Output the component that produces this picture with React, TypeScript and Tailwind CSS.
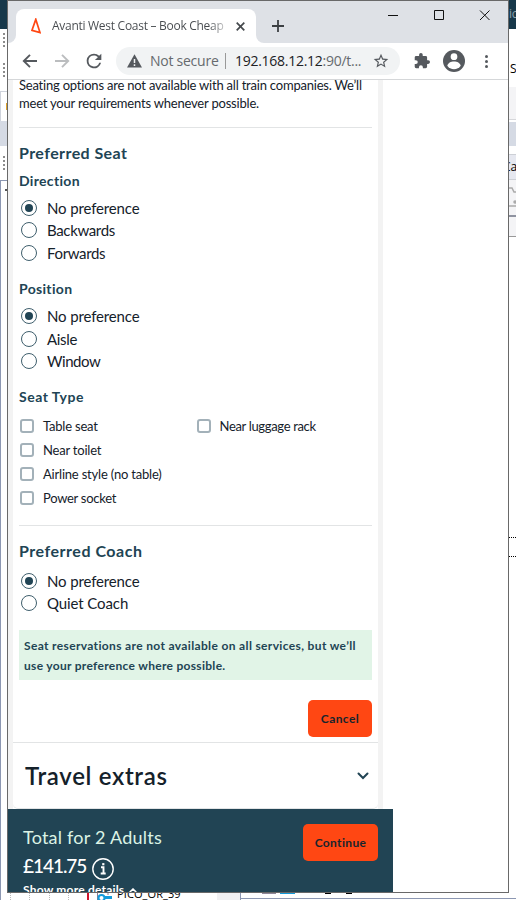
import { ReactNode } from "react";

function Radio({ label, checked, track }: { label: string; checked?: boolean; track: string }) {
  return (
    <label className="flex h-[22.5px] items-center">
      <span className="ml-[2px] flex size-4 shrink-0 items-center justify-center rounded-full border border-[#3f5f6d]">
        {checked && <span className="size-2 rounded-full bg-[#214454]" />}
      </span>
      <span className={`ml-[10px] whitespace-nowrap text-[15px] leading-5 text-[#15212a] ${track}`}>{label}</span>
    </label>
  );
}

function Check({ label, track }: { label: string; track: string }) {
  return (
    <label className="flex h-6 items-center">
      <span className="ml-px size-[14px] shrink-0 rounded-[3px] border-2 border-[#a3b1b9]" />
      <span className={`ml-[9px] whitespace-nowrap text-[13px] leading-5 text-[#15212a] ${track}`}>{label}</span>
    </label>
  );
}

function Line({ children, className }: { children: ReactNode; className: string }) {
  return <div className={`whitespace-nowrap ${className}`}>{children}</div>;
}

function Dots({ className }: { className: string }) {
  return (
    <div className={`flex flex-col items-center justify-between pl-px ${className}`}>
      <i className="size-[2px] bg-[#8c8c8c]" />
      <i className="size-[2px] bg-[#8c8c8c]" />
      <i className="size-[2px] bg-[#8c8c8c]" />
      <i className="size-[2px] bg-[#8c8c8c]" />
    </div>
  );
}

function Desktop() {
  return (
    <div className="flex h-[900px] flex-col bg-white">
      <div className="flex h-[889px] shrink-0 justify-between">
        <div className="flex w-[7px] flex-col">
          <div className="h-[29px] bg-[#17384a]" />
          <Dots className="mt-1 h-[14px]" />
          <Dots className="mt-4 h-[14px]" />
          <div className="mt-[14px] flex h-[30px] items-center border-t border-l border-[#cfd3dc] pl-[5px]">
            <i className="h-[7px] w-px bg-[#dfa32c]" />
          </div>
          <div className="h-[25px] bg-[#d5dae4]" />
          <Dots className="mt-[10px] h-[14px]" />
          <div className="mt-[10px] flex-1 border-t border-l border-[#8c97b2] pt-2 pl-[4px]">
            <i className="block h-[2px] w-[2px] bg-[#555]" />
          </div>
        </div>
        <div className="flex w-[7px] flex-col overflow-hidden font-['Open_Sans',sans-serif] text-[12px] leading-4 whitespace-nowrap text-black">
          <div className="h-[29px] bg-[#17384a] pt-[6px] tracking-[-0.4px] text-[#8fa3ae]">ic</div>
          <div className="h-[58px] pt-8"><span className="ml-px">S</span></div>
          <div className="h-[33px] border-b border-[#d6d7da] bg-[#f4f4f6]" />
          <div className="mt-[2px] h-6 bg-[#d5dae4]" />
          <div className="mt-2 h-[26px] border-y border-[#cdd0d6] bg-[#e6e8f0] pt-1"><span className="-ml-[6px]">Ca</span></div>
          <svg className="h-[35px] w-[7px] bg-[#f4f4f6]" viewBox="0 0 7 35" fill="none" stroke="#aaa" strokeWidth="1.5">
            <path d="M0 8h3l2 4h2M0 26h7" />
            <circle cx="6" cy="22" r="1" fill="#aaa" />
          </svg>
          <div className="h-[22px] border-t-2 border-b border-t-[#8f93a0] border-b-[#999] bg-[#f4f4f6]" />
          <div className="mt-[300px] h-[20px] border-y border-dotted border-black" />
        </div>
      </div>
      <div className="flex h-[11px] font-['Open_Sans',sans-serif] text-[11px] text-black">
        <div className="flex w-[241px] shrink-0 border-l border-[#8c97b2]">
          <div className="flex w-[88px] justify-between pl-[9px]">
            <i className="border-l border-dotted border-[#bbb]" />
            <i className="border-l border-dotted border-[#bbb]" />
            <i className="border-l border-dotted border-[#bbb]" />
            <i className="border-l border-dotted border-[#bbb]" />
            <i className="w-[2px] bg-[#cf142b]" />
          </div>
          <svg className="ml-[7px] h-[11px] w-4 shrink-0" viewBox="0 0 16 11">
            <path d="M1.500 0v11M12 4v2" stroke="#897b91" fill="none" />
            <circle cx="5.500" cy="9" r="3" fill="none" stroke="#129bdb" strokeWidth="2" />
            <path d="M8 7h8v3H8z" fill="#129bdb" />
          </svg>
          <span className="ml-[5px] -mt-[2px] whitespace-nowrap leading-[13px] tracking-[0.1px]">PICO_OR_39</span>
          <div className="ml-auto w-[24px] border-r border-[#8c97b2] bg-[#f1f1f3]" />
        </div>
        <div className="flex flex-1 flex-col">
          <div className="flex h-[10px] items-end border-b border-[#8c97b2] pl-[21px] pb-[4px]">
            <i className="h-[2px] w-[14px] bg-[#8e8799]" />
            <i className="ml-1 h-[2px] w-[15px] bg-[#129bdb]" />
            <i className="ml-[30px] h-[2px] w-[6px] bg-black" />
            <i className="ml-[15px] h-[2px] w-[6px] bg-black" />
          </div>
        </div>
      </div>
    </div>
  );
}

function BrowserChrome() {
  return (
    <header className="font-['Open_Sans','Noto_Sans',sans-serif]">
      <div className="flex h-[42px] bg-[#dee1e6]">
        <div className="flex w-2 items-end bg-white"><div className="h-[42px] w-2 rounded-br-lg bg-[#dee1e6]" /></div>
        <div className="mt-2 flex w-[240px] items-center rounded-t-lg bg-white">
          <svg className="ml-[15px] h-4 w-[10px]" viewBox="0 0 10 16" fill="none" stroke="#ff4713" strokeWidth="1.7">
            <path d="M4.800 1.400 1 12.300l8 2.300z" />
          </svg>
          <span className="ml-[11px] w-[174px] whitespace-nowrap bg-gradient-to-r from-[#45494d] from-90% to-[#d8d8d8] bg-clip-text text-[12px] leading-5 tracking-[-0.28px] text-transparent">Avanti West Coast – Book Cheap</span>
          <svg className="ml-[10px] size-[9px]" viewBox="0 0 9 9" stroke="#45494d" strokeWidth="1.7"><path d="m.7.7 7.6 7.6m0-7.6L.7 8.3" /></svg>
        </div>
        <div className="w-2 bg-white"><div className="h-[42px] w-2 rounded-bl-lg bg-[#dee1e6]" /></div>
        <svg className="mt-[19px] ml-2 size-3" viewBox="0 0 12 12" stroke="#3c4043" strokeWidth="1.8"><path d="M6 0v12M0 6h12" /></svg>
        <svg className="mt-[9px] ml-auto mr-[17px] h-[11px] w-[104px]" viewBox="0 0 104 11" fill="none" stroke="#111" strokeWidth="1">
          <path d="M1 5.500h10M47.500.5h9v9h-9zM93 .5l9.500 9.500m0-9.500L93 10" />
        </svg>
      </div>
      <div className="flex h-[37px] items-center border-b border-[#d5d7d9] bg-white">
        <svg className="ml-[14px] h-[14px] w-4" viewBox="0 0 16 14" fill="none" stroke="#55595e" strokeWidth="1.9"><path d="M15 7H2M8 .8 1.8 7 8 13.2" /></svg>
        <svg className="ml-4 h-[14px] w-4" viewBox="0 0 16 14" fill="none" stroke="#bbbdbf" strokeWidth="1.9"><path d="M1 7h13M8 .8 14.2 7 8 13.2" /></svg>
        <svg className="ml-[13px] size-[22px]" viewBox="0 0 24 24" fill="#55595e"><path d="M17.65 6.35A7.96 7.96 0 0 0 12 4a8 8 0 1 0 7.73 10h-2.08A6 6 0 1 1 12 6c1.66 0 3.14.69 4.22 1.78L13 11h7V4z" /></svg>
        <div className="ml-[11px] flex h-7 w-[284px] items-center rounded-full bg-[#f1f3f4]">
          <svg className="ml-[11px] h-[14px] w-[15px]" viewBox="0 0 15 14"><path d="M7.500.300 15 13.500H0z" fill="#55595e" /><path d="M7.500 5v4M7.500 10.300v1.700" stroke="#f1f3f4" strokeWidth="1.500" /></svg>
          <span className="ml-[8px] w-[67px] whitespace-nowrap text-[14px] leading-5 tracking-[-0.25px] text-[#666a6e]">Not secure</span>
          <i className="ml-[8px] h-4 w-px bg-[#999]" />
          <span className="ml-[9px] w-[124px] whitespace-nowrap text-[14px] leading-5 tracking-[-0.27px] text-[#202124]">192.168.12.12<span className="text-[#666a6e]">:90/t...</span></span>
          <svg className="ml-[14px] size-[16px]" viewBox="1 1 22 22" fill="#55595e"><path d="m22 9.240-7.190-.620L12 2 9.190 8.630 2 9.240l5.460 4.730L5.820 21 12 17.270 18.180 21l-1.630-7.030zM12 15.400l-3.760 2.270 1-4.280-3.320-2.880 4.380-.380L12 6.100l1.710 4.040 4.380.380-3.320 2.880 1 4.280z" /></svg>
        </div>
        <svg className="ml-[14px] size-[16px]" viewBox="1 1 22 22" fill="#55595e"><path d="M20.500 11H19V7a2 2 0 0 0-2-2h-4V3.500a2.500 2.500 0 0 0-5 0V5H4a2 2 0 0 0-2 2v3.800h1.500a2.700 2.700 0 0 1 0 5.400H2V20a2 2 0 0 0 2 2h3.800v-1.500a2.700 2.700 0 0 1 5.400 0V22H17a2 2 0 0 0 2-2v-4h1.500a2.500 2.500 0 0 0 0-5z" /></svg>
        <svg className="ml-[13px] size-[22px]" viewBox="0 0 23 23"><circle cx="11.500" cy="11.500" r="11.500" fill="#55595e" /><circle cx="11.500" cy="7" r="3.500" fill="#fff" /><path d="M4.500 16.500c1-6 13-6 14 0a8.500 8.500 0 0 1-14 0z" fill="#fff" /></svg>
        <div className="ml-5 flex h-[13px] flex-col justify-between"><i className="size-[3px] rounded-full bg-[#55595e]" /><i className="size-[3px] rounded-full bg-[#55595e]" /><i className="size-[3px] rounded-full bg-[#55595e]" /></div>
      </div>
    </header>
  );
}

function SeatForm() {
  return (
    <main className="h-[729px] w-[375px] border-x-[5px] border-[#f3f3f3] bg-white">
      <div className="mx-[6px] flex h-[662px] flex-col">
        <Line className="-mt-1 text-[13px] leading-[18px] tracking-[-0.21px] text-[#15212a]">Seating options are not available with all train companies. We’ll</Line>
        <Line className="text-[13px] leading-[18px] tracking-[-0.2px] text-[#15212a]">meet your requirements whenever possible.</Line>
        <hr className="mt-[15px] border-[#e2e4e5]" />
        <Line className="mt-[15px] text-[16px] leading-5 font-bold tracking-[0.42px] text-[#214454]">Preferred Seat</Line>
        <Line className="mt-[8px] text-[14px] leading-5 font-bold tracking-[0.32px] text-[#214454]">Direction</Line>
        <div className="mt-[5.4px]">
          <Radio label="No preference" checked track="tracking-[-0.14px]" />
          <Radio label="Backwards" track="tracking-[-0.35px]" />
          <Radio label="Forwards" track="tracking-[-0.35px]" />
        </div>
        <Line className="mt-[15.1px] text-[14px] leading-5 font-bold tracking-[0.32px] text-[#214454]">Position</Line>
        <div className="mt-[5.9px]">
          <Radio label="No preference" checked track="tracking-[-0.14px]" />
          <Radio label="Aisle" track="tracking-[-0.3px]" />
          <Radio label="Window" track="tracking-[-0.45px]" />
        </div>
        <Line className="mt-[15.1px] text-[14px] leading-5 font-bold tracking-[0.5px] text-[#214454]">Seat Type</Line>
        <div className="mt-[7px] grid grid-cols-2">
          <Check label="Table seat" track="tracking-[-0.2px]" />
          <Check label="Near luggage rack" track="tracking-[-0.33px]" />
          <Check label="Near toilet" track="tracking-[-0.2px]" />
          <i />
          <Check label="Airline style (no table)" track="tracking-[-0.2px]" />
          <i />
          <Check label="Power socket" track="tracking-[-0.28px]" />
        </div>
        <hr className="mt-[15px] border-[#e2e4e5]" />
        <Line className="mt-[15px] text-[16px] leading-5 font-bold tracking-[0.52px] text-[#214454]">Preferred Coach</Line>
        <div className="mt-[8px]">
          <Radio label="No preference" checked track="tracking-[-0.14px]" />
          <Radio label="Quiet Coach" track="tracking-[-0.1px]" />
        </div>
        <div className="mt-4 h-[50px] bg-[#e1f4e7] px-[5px] pt-[6px] text-[12px] leading-5 font-bold text-[#214454]">
          <Line className="tracking-[0.35px]">Seat reservations are not available on all services, but we’ll</Line>
          <Line className="tracking-[0.3px]">use your preference where possible.</Line>
        </div>
        <button className="mt-5 h-[37px] w-16 self-end rounded-[5px] bg-[#ff4713] text-[12px] font-bold tracking-[0.4px] text-[#17242c]">Cancel</button>
      </div>
      <section className="flex h-[67px] items-center justify-between rounded-b-[5px] border-y border-[#e2e4e5] pr-[9px] pl-3">
        <h2 className="whitespace-nowrap text-[24px] leading-8 font-semibold tracking-[0.68px] text-[#14212a]">Travel extras</h2>
        <svg className="h-[8px] w-3" viewBox="0 0 12 8" fill="none" stroke="#214454" strokeWidth="2" strokeLinecap="round"><path d="m1.500 1.500 4.500 4.500 4.500-4.500" /></svg>
      </section>
    </main>
  );
}

function TotalBar() {
  return (
    <footer className="flex h-[83px] w-[385px] justify-between overflow-hidden bg-[#214454] pr-[15px] pl-[15px]">
      <div className="flex flex-col pt-[17px]">
        <Line className="text-[18px] leading-[22px] tracking-[0.23px] text-[#dcf3e5]">Total for 2 Adults</Line>
        <div className="mt-[7px] flex h-[22px] items-center">
          <Line className="text-[19px] leading-[22px] tracking-[-1.05px] font-medium text-white">£141.75</Line>
          <svg className="mt-[5px] ml-[6px] size-[22px] shrink-0" viewBox="0 0 22 22" fill="none" stroke="#fff">
            <circle cx="11" cy="11" r="10.200" strokeWidth="1.400" />
            <path d="M9 9.300h2.500v6M8.700 15.500h5" strokeWidth="1.900" />
            <path d="M10.200 6.200h2.200" strokeWidth="2.200" />
          </svg>
        </div>
        <div className="mt-[5px] flex items-center text-[12px] leading-[16px] font-bold text-white">
          <Line className="tracking-[0.2px]">Show more details</Line>
          <svg className="ml-[5px] h-[5px] w-2" viewBox="0 0 8 5" fill="none" stroke="#fff" strokeWidth="1.500"><path d="m.7 4.300 3.300-3.300 3.300 3.300" /></svg>
        </div>
      </div>
      <button className="mt-[15px] h-[37px] w-[75px] rounded-[5px] bg-[#ff4713] text-[12px] font-bold tracking-[0.35px] text-[#17242c]">Continue</button>
    </footer>
  );
}

export default function App() {
  return (
    <div className="relative h-[900px] w-[516px] overflow-hidden font-[Lato,sans-serif]">
      <Desktop />
      <div className="absolute top-0 left-[7px] flex h-[893px] w-[502px] flex-col overflow-hidden border border-[#696969] bg-white">
        <BrowserChrome />
        <SeatForm />
        <TotalBar />
      </div>
    </div>
  );
}
